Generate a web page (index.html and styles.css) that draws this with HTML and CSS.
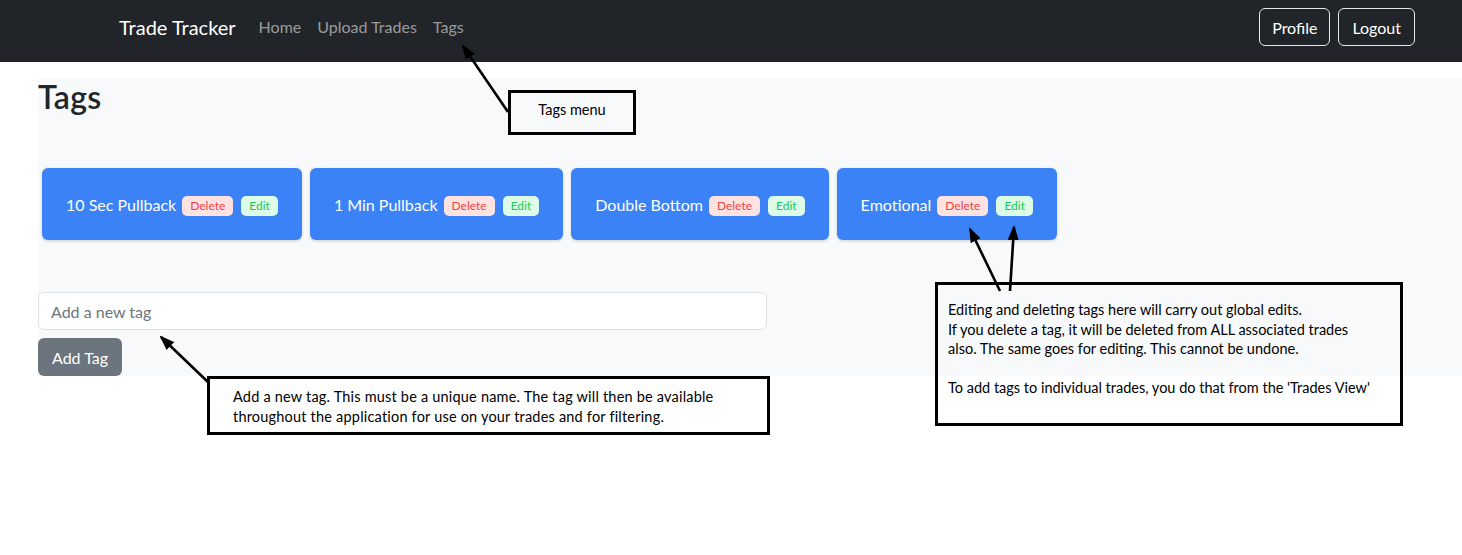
FILE: index.html
```html
<!DOCTYPE html>
<html lang="en">
<head>
<meta charset="utf-8">
<title>Trade Tracker - Tags</title>
<link rel="stylesheet" href="styles.css">
</head>
<body>
<nav class="navbar">
  <div class="nav-left">
    <a class="brand" href="#">Trade Tracker</a>
    <a class="nav-link" href="#">Home</a>
    <a class="nav-link" href="#">Upload Trades</a>
    <a class="nav-link" href="#">Tags</a>
  </div>
  <div class="nav-right">
    <button class="btn-outline">Profile</button>
    <button class="btn-outline btn-logout">Logout</button>
  </div>
</nav>

<main class="page">
  <section class="panel">
    <h2 class="title">Tags</h2>
    <div class="tag-row">
      <div class="tag-card"><span class="tag-name">10 Sec Pullback</span><span class="badge badge-del">Delete</span><span class="badge badge-edit">Edit</span></div>
      <div class="tag-card"><span class="tag-name">1 Min Pullback</span><span class="badge badge-del">Delete</span><span class="badge badge-edit">Edit</span></div>
      <div class="tag-card"><span class="tag-name">Double Bottom</span><span class="badge badge-del">Delete</span><span class="badge badge-edit">Edit</span></div>
      <div class="tag-card"><span class="tag-name">Emotional</span><span class="badge badge-del">Delete</span><span class="badge badge-edit">Edit</span></div>
    </div>
    <form class="add-form">
      <input class="tag-input" type="text" placeholder="Add a new tag">
      <button class="btn-add" type="button">Add Tag</button>
    </form>
  </section>
</main>

<div class="note note-menu">Tags menu</div>
<div class="note note-add">Add a new tag. This must be a unique name. The tag will then be available<br>throughout the application for use on your trades and for filtering.</div>
<div class="note note-edit">Editing and deleting tags here will carry out global edits.<br>If you delete a tag, it will be deleted from ALL associated trades<br>also. The same goes for editing. This cannot be undone.<br><br>To add tags to individual trades, you do that from the 'Trades View'</div>

<svg class="arrows" width="1462" height="555" viewBox="0 0 1462 555">
  <defs>
    <marker id="head" markerUnits="userSpaceOnUse" markerWidth="15" markerHeight="11" viewBox="0 0 15 11" refX="13" refY="5.5" orient="auto">
      <path d="M0,0 L15,5.5 L0,11 Z" fill="#000"/>
    </marker>
  </defs>
  <line x1="508" y1="112" x2="463" y2="46" stroke="#000" stroke-width="2.6" marker-end="url(#head)"/>
  <line x1="209" y1="383" x2="161" y2="337" stroke="#000" stroke-width="2.6" marker-end="url(#head)"/>
  <line x1="1000" y1="291" x2="970" y2="229" stroke="#000" stroke-width="2.6" marker-end="url(#head)"/>
  <line x1="1010" y1="291" x2="1014" y2="227" stroke="#000" stroke-width="2.6" marker-end="url(#head)"/>
</svg>
</body>
</html>
```

FILE: styles.css
```css
* { box-sizing: border-box; }

html, body {
  margin: 0;
  padding: 0;
  background: #fff;
}

body {
  font-family: Lato, "Noto Sans", sans-serif;
  color: #212529;
  font-size: 16px;
  position: relative;
  width: 1462px;
  height: 555px;
  overflow: hidden;
}

/* Navbar */
.navbar {
  height: 62px;
  background: #212529;
  display: flex;
  justify-content: space-between;
  align-items: flex-start;
  padding: 8px 47px 0 119px;
}

.nav-left {
  display: flex;
  align-items: center;
  height: 38px;
}

.brand {
  color: #fff;
  font-size: 20px;
  text-decoration: none;
  margin-right: 15px;
  line-height: 38px;
}

.nav-link {
  color: rgba(255, 255, 255, 0.55);
  text-decoration: none;
  font-size: 16px;
  padding: 0 8px;
  line-height: 38px;
}

.nav-right {
  display: flex;
  gap: 8px;
}

.btn-outline {
  font-family: inherit;
  font-size: 16px;
  color: #fff;
  background: transparent;
  border: 1px solid #e5e7ea;
  border-radius: 6px;
  height: 38px;
  padding: 0 12px;
}

.btn-logout {
  padding: 0 13px;
}

/* Page */
.page {
  margin-top: 16px;
  padding-left: 38px;
}

.panel {
  background: #f8f9fa;
}

.title {
  margin: 0;
  font-size: 32px;
  font-weight: 600;
  line-height: 38px;
  letter-spacing: 0.3px;
  color: #212529;
}

.tag-row {
  display: flex;
  flex-wrap: wrap;
  gap: 8px;
  padding: 4px;
  margin-top: 48px;
}

.tag-card {
  display: flex;
  align-items: center;
  gap: 8px;
  height: 72px;
  padding: 0 24px;
  background: #3b82f6;
  border-radius: 6px;
  box-shadow: 0 1px 3px rgba(0, 0, 0, 0.18);
  color: #fff;
}

.tag-name {
  font-size: 16px;
  margin-right: -2px;
}

.badge {
  font-size: 12px;
  line-height: 16px;
  padding: 2px 8px;
  border-radius: 5px;
  margin-top: 4px;
}

.badge-del {
  background: #fee2e2;
  color: #ef4444;
}

.badge-edit {
  background: #dcfce7;
  color: #22c55e;
}

.add-form {
  margin: 48px 0 0;
  display: flex;
  flex-direction: column;
  align-items: flex-start;
  gap: 8px;
}

.tag-input {
  width: 729px;
  height: 38px;
  border: 1px solid #dee2e6;
  border-radius: 6px;
  padding: 6px 12px;
  font-family: inherit;
  font-size: 16px;
  background: #fff;
  color: #212529;
}

.tag-input::placeholder {
  color: #6c757d;
}

.btn-add {
  height: 38px;
  padding: 0 14px;
  font-family: inherit;
  font-size: 16px;
  color: #fff;
  background: #6c757d;
  border: none;
  border-radius: 6px;
}

/* Annotations */
.note {
  position: absolute;
  border: 3px solid #000;
  font-family: Lato, "Noto Sans", sans-serif;
  font-size: 14.5px;
  line-height: 19.5px;
  color: #000;
}

.note-menu {
  left: 508px;
  top: 90px;
  width: 128px;
  height: 45px;
  display: flex;
  align-items: center;
  justify-content: center;
  padding-bottom: 6px;
}

.note-add {
  left: 207px;
  top: 376px;
  width: 563px;
  height: 59px;
  padding: 8px 0 0 23px;
  letter-spacing: 0.2px;
}

.note-edit {
  left: 935px;
  top: 282px;
  width: 468px;
  height: 144px;
  padding: 15px 0 0 10px;
}

.arrows {
  position: absolute;
  left: 0;
  top: 0;
  pointer-events: none;
}
```
